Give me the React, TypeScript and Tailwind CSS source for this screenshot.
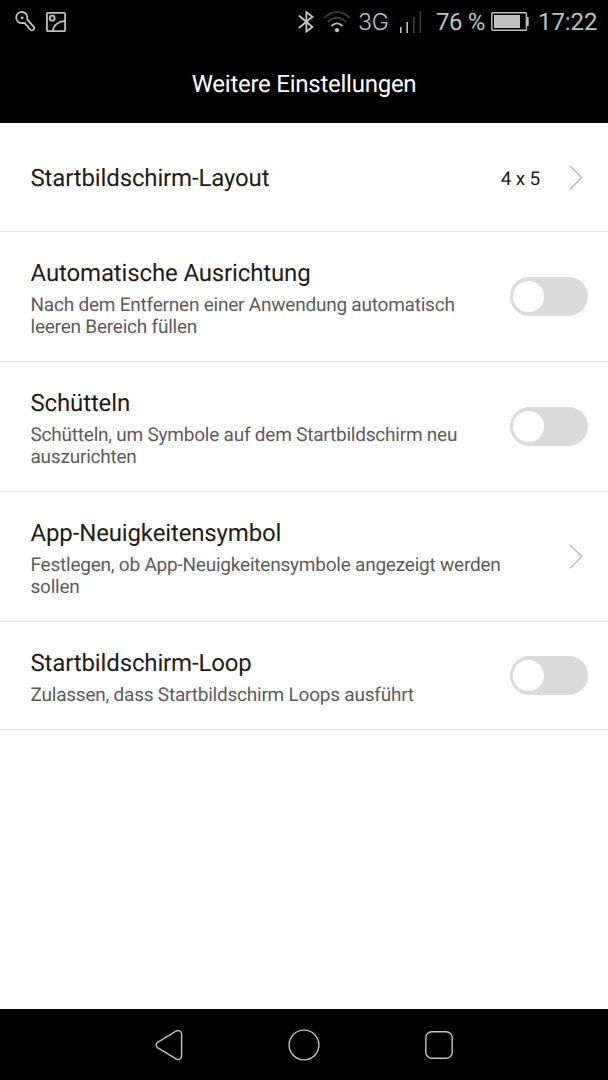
import { useState } from 'react'

interface Setting {
  id: string
  title: string
  description?: string
  value?: string
  type: 'link' | 'toggle'
}

const settings: Setting[] = [
  { id: 'layout', title: 'Startbildschirm-Layout', value: '4 x 5', type: 'link' },
  {
    id: 'align',
    title: 'Automatische Ausrichtung',
    description: 'Nach dem Entfernen einer Anwendung automatisch leeren Bereich füllen',
    type: 'toggle',
  },
  {
    id: 'shake',
    title: 'Schütteln',
    description: 'Schütteln, um Symbole auf dem Startbildschirm neu auszurichten',
    type: 'toggle',
  },
  {
    id: 'badges',
    title: 'App-Neuigkeitensymbol',
    description: 'Festlegen, ob App-Neuigkeitensymbole angezeigt werden sollen',
    type: 'link',
  },
  {
    id: 'loop',
    title: 'Startbildschirm-Loop',
    description: 'Zulassen, dass Startbildschirm Loops ausführt',
    type: 'toggle',
  },
]

function StatusBar() {
  return (
    <div className="flex h-[43px] items-center pl-[14px] pr-[10px] text-[#c0c0c0]">
      {/* Key */}
      <svg className="h-6 w-6 shrink-0" viewBox="0 0 24 24" fill="none" stroke="currentColor" strokeWidth="1.8" strokeLinejoin="round">
        <path d="M13.1 9.2 A5.6 5.6 0 1 0 9 13 L11.2 13.2 L12 15.2 L13.6 15.8 L14.4 17.8 L17 20.2 Q19.8 20.8 20.4 17.6 Z" />
        <circle cx="8.2" cy="7.8" r="1.4" fill="currentColor" stroke="none" />
      </svg>
      {/* Picture */}
      <svg className="ml-[8px] h-5 w-5 shrink-0" viewBox="0 0 20 20" fill="none" stroke="currentColor" strokeWidth="1.8">
        <rect x="0.9" y="0.9" width="18.2" height="18.2" rx="0.8" />
        <circle cx="6.2" cy="6.2" r="2.5" />
        <path d="M6.8 19 C7.4 13.5 12 9.4 19 9" />
      </svg>

      <div className="ml-auto flex items-center">
        {/* Bluetooth */}
        <svg className="h-6 w-4" viewBox="0 0 16 24" fill="none" stroke="currentColor" strokeWidth="1.9">
          <path d="M0.8 5.6 L14.4 17 L8.4 21.6 V2.2 L14.4 6.8 L0.8 18" />
        </svg>
        {/* WLAN */}
        <svg className="ml-[9px] h-6 w-[28px]" viewBox="0 0 28 24" fill="none" strokeWidth="1.8">
          <path d="M1 8 Q14 -4 27 8" stroke="#3c3c3c" />
          <path d="M5 12 Q14 3.6 23 12" stroke="#3c3c3c" />
          <path d="M8.5 16 Q14 10.8 19.5 16" stroke="currentColor" />
          <circle cx="14" cy="20.2" r="2.1" fill="currentColor" />
        </svg>
        <span className="ml-[7px] w-8 font-['Inter','Liberation_Sans',sans-serif] text-[23px] font-light leading-6 tracking-[-0.3px]">3G</span>
        {/* Signal */}
        <svg className="ml-[9px] h-6 w-6" viewBox="0 0 24 24">
          <path d="M1 17h1.6v6H1zM7.4 12H9v11H7.4z" fill="#c0c0c0" />
          <path d="M14 7h1.6v16H14zM20.6 1h1.6v22h-1.6z" fill="#3c3c3c" />
        </svg>
        <span className="ml-[13px] w-[55px] whitespace-nowrap text-[24px] leading-6 tracking-[-0.4px]">76 %</span>
        {/* Battery */}
        <svg className="h-[19px] w-[38px]" viewBox="0 0 38 19">
          <rect x="0.8" y="0.8" width="34.6" height="17.4" rx="0.8" fill="none" stroke="currentColor" strokeWidth="1.4" />
          <rect x="3" y="3" width="26" height="13" fill="currentColor" />
          <path d="M35.4 5h2.3v9h-2.3z" fill="currentColor" />
        </svg>
        <span className="ml-[9px] w-[60px] whitespace-nowrap text-[24px] leading-6 tracking-[-0.1px]">17:22</span>
      </div>
    </div>
  )
}

function Toggle({ label, checked, onChange }: { label: string; checked: boolean; onChange: () => void }) {
  return (
    <button
      type="button"
      role="switch"
      aria-label={label}
      aria-checked={checked}
      onClick={onChange}
      className={`mb-[4px] flex h-[39px] w-[78px] items-center rounded-full px-[3px] ${
        checked ? 'justify-end bg-[#0a9bd8]' : 'justify-start bg-[#dadada]'
      }`}
    >
      <span className="h-[31px] w-[31px] rounded-full bg-white" />
    </button>
  )
}

function SettingRow({ setting, checked, onToggle }: { setting: Setting; checked: boolean; onToggle: () => void }) {
  return (
    <li className="flex min-h-[108px] items-center border-b border-[#e4e4e4] pb-[23px] pl-[30.5px] pr-5 pt-[26px]">
      <div className="flex-1">
        <h2
          className={`text-[24px] leading-[30px] tracking-[-0.14px] text-[#1c1c1c] ${
            setting.description ? '' : 'mb-[2px]'
          }`}
        >
          {setting.title}
        </h2>
        {setting.description && (
          <p
            className={`mt-[6px] text-[19px] leading-[22px] tracking-[-0.22px] text-[#5c5c5c] ${
              setting.type === 'toggle' ? 'max-w-[440px]' : 'max-w-[480px]'
            }`}
          >
            {setting.description}
          </p>
        )}
      </div>
      <div className="flex shrink-0 items-center">
        {setting.value && (
          <span className="mr-[29px] text-[19px] leading-[22px] tracking-[-0.2px] text-[#1c1c1c]">{setting.value}</span>
        )}
        {setting.type === 'toggle' ? (
          <Toggle label={setting.title} checked={checked} onChange={onToggle} />
        ) : (
          <svg className="mb-[4px] mr-[5px] h-[25px] w-[14px]" viewBox="0 0 14 25" fill="none" stroke="#b4b4b4" strokeWidth="1.3">
            <path d="M0.8 0.8 L12.8 12.5 L0.8 24.2" />
          </svg>
        )}
      </div>
    </li>
  )
}

export default function App() {
  const [enabled, setEnabled] = useState<Record<string, boolean>>({})

  const toggle = (id: string) => {
    setEnabled((prev) => ({ ...prev, [id]: !prev[id] }))
  }

  return (
    <div className="flex h-screen w-full flex-col overflow-hidden bg-white font-['Roboto',sans-serif] [text-rendering:geometricPrecision]">
      <header className="h-[123px] shrink-0 bg-black">
        <StatusBar />
        <h1 className="text-center text-[24px] leading-[82px] tracking-[-0.25px] text-white">Weitere Einstellungen</h1>
      </header>

      <main className="flex-1 pt-px">
        <ul>
          {settings.map((setting) => (
            <SettingRow
              key={setting.id}
              setting={setting}
              checked={!!enabled[setting.id]}
              onToggle={() => toggle(setting.id)}
            />
          ))}
        </ul>
      </main>

      {/* Navigation bar */}
      <nav className="flex h-[71px] shrink-0 items-center justify-center gap-[103px] bg-black pt-[1px] text-[#c4c4c4]">
        <button type="button" aria-label="Zurück">
          <svg className="h-8 w-8" viewBox="0 0 32 32" fill="none" stroke="currentColor" strokeWidth="1.4">
            <path d="M4.6 13.4 L23 2.2 C26 0.6 28.6 2 28.6 5 V27 C28.6 30 26 31.4 23 29.8 L4.6 18.6 C2.6 17.2 2.6 14.8 4.6 13.4 Z" />
          </svg>
        </button>
        <button type="button" aria-label="Startseite">
          <svg className="h-8 w-8" viewBox="0 0 32 32" fill="none" stroke="currentColor" strokeWidth="1.4">
            <circle cx="16" cy="16" r="14.9" />
          </svg>
        </button>
        <button type="button" aria-label="Letzte Apps">
          <svg className="h-8 w-8" viewBox="0 0 32 32" fill="none" stroke="currentColor" strokeWidth="1.4">
            <rect x="2.8" y="2.8" width="26.4" height="26.4" rx="6" />
          </svg>
        </button>
      </nav>
    </div>
  )
}
